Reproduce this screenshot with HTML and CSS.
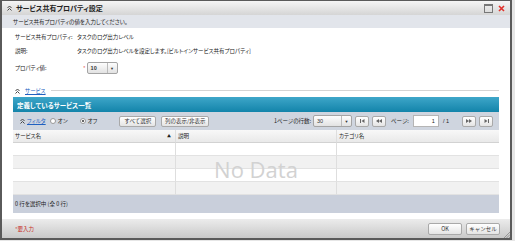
FILE: index.html
```html
<!DOCTYPE html>
<html lang="ja">
<head>
    <meta charset="UTF-8">
    <title>サービス共有プロパティ設定</title>
    <link rel="stylesheet" href="styles.css">
</head>
<body>

    <div class="window">
        <!-- タイトルバー -->
        <div class="titlebar">
            <svg class="chev" width="5" height="6" viewBox="0 0 5 6"><path d="M0.5 3 L2.5 1 L4.5 3 M0.5 5.5 L2.5 3.5 L4.5 5.5" fill="none" stroke="#444" stroke-width="1"/></svg>
            <span class="title">サービス共有プロパティ設定</span>
            <span class="win-max"></span>
            <svg class="win-close" width="7" height="7" viewBox="0 0 7 7"><path d="M1 1 L6 6 M6 1 L1 6" stroke="#e0302a" stroke-width="1.6"/></svg>
        </div>
        <div class="subtitle">サービス共有プロパティの値を入力してください。</div>

        <div class="content">
            <div class="field"><span class="label">サービス共有プロパティ:</span><span>タスクのログ出力レベル</span></div>
            <div class="field"><span class="label">説明:</span><span>タスクのログ出力レベルを設定します。[ビルトインサービス共有プロパティ]</span></div>
            <div class="field prop">
                <span class="label">プロパティ値:</span>
                <span class="req">*</span>
                <span class="combo small"><span class="combo-val">10</span><span class="combo-arrow">▼</span></span>
            </div>

            <div class="section">
                <svg class="chev" width="5" height="6" viewBox="0 0 5 6"><path d="M0.5 3 L2.5 1 L4.5 3 M0.5 5.5 L2.5 3.5 L4.5 5.5" fill="none" stroke="#444" stroke-width="1"/></svg>
                <a class="link" href="#">サービス</a>
                <span class="rule"></span>
            </div>

            <div class="panel">
                <div class="panel-head">定義しているサービス一覧</div>
                <div class="toolbar">
                    <svg class="chev" width="5" height="6" viewBox="0 0 5 6"><path d="M0.5 3 L2.5 1 L4.5 3 M0.5 5.5 L2.5 3.5 L4.5 5.5" fill="none" stroke="#444" stroke-width="1"/></svg>
                    <a class="link filter" href="#">フィルタ</a>
                    <span class="radio"></span><span class="radio-text">オン</span>
                    <span class="radio on"></span><span class="radio-text">オフ</span>
                    <button class="btn sel-all">すべて選択</button>
                    <button class="btn cols">列の表示/非表示</button>

                    <div class="pager">
                        <span>1ページの行数:</span>
                        <span class="combo rows"><span class="combo-val">30</span><span class="combo-arrow">▼</span></span>
                        <button class="btn pg"><svg width="5" height="4" viewBox="0 0 5 4"><path d="M0.5 0 V4" stroke="#666"/><path d="M4.5 0 L1.5 2 L4.5 4 Z" fill="#666"/></svg></button>
                        <button class="btn pg"><svg width="6" height="4" viewBox="0 0 6 4"><path d="M3 0 L0 2 L3 4 Z M6 0 L3 2 L6 4 Z" fill="#666"/></svg></button>
                        <span class="page-lbl">ページ:</span>
                        <span class="page-input">1</span>
                        <span class="page-total">/ 1</span>
                        <button class="btn pg next"><svg width="6" height="4" viewBox="0 0 6 4"><path d="M0 0 L3 2 L0 4 Z M3 0 L6 2 L3 4 Z" fill="#666"/></svg></button>
                        <button class="btn pg"><svg width="5" height="4" viewBox="0 0 5 4"><path d="M0.5 0 L3.5 2 L0.5 4 Z" fill="#666"/><path d="M4.5 0 V4" stroke="#666"/></svg></button>
                    </div>
                </div>

                <div class="grid">
                    <div class="cell head">サービス名<span class="sort">▲</span></div>
                    <div class="cell head">説明</div>
                    <div class="cell head">カテゴリ名</div>

                    <div class="cell"></div><div class="cell"></div><div class="cell"></div>
                    <div class="cell alt"></div><div class="cell alt"></div><div class="cell alt"></div>
                    <div class="cell"></div><div class="cell"></div><div class="cell"></div>
                    <div class="cell alt"></div><div class="cell alt"></div><div class="cell alt"></div>

                    <div class="no-data">No Data</div>
                </div>

                <div class="panel-foot">0 行を選択中 (全 0 行)</div>
            </div>
        </div>

        <!-- フッター -->
        <div class="footer">
            <span class="req-note">*要入力</span>
            <button class="btn foot-btn">OK</button>
            <button class="btn foot-btn">キャンセル</button>
            <svg class="grip" width="7" height="7" viewBox="0 0 7 7"><path d="M1 7 L7 1 M3.5 7 L7 3.5 M6 7 L7 6" stroke="#888" stroke-width="0.8"/></svg>
        </div>
    </div>

</body>
</html>
```

FILE: styles.css
```css
body {
    margin: 0;
    background: #e6e6e6;
    font-family: "Noto Sans CJK JP", "Liberation Sans", sans-serif;
    font-size: 5.5px;
    color: #222;
    font-feature-settings: "palt";
}

.window {
    width: 508px;
    height: 237px;
    border: solid #5a5a5a;
    border-width: 1px 2px 2px 2px;
    background: #fff;
    display: flex;
    flex-direction: column;
}

/* タイトルバー */
.titlebar {
    height: 14px;
    display: flex;
    align-items: center;
    padding: 0 5px 0 5px;
    background: linear-gradient(#f5f5f5, #d5d5d5);
}
.titlebar .chev {
    margin-right: 4px;
}
.title {
    font-size: 7px;
    font-weight: bold;
    color: #222;
    flex: 1;
}
.win-max {
    width: 7px;
    height: 6px;
    border: 1px solid #777;
    border-top-width: 2px;
    margin-right: 5px;
}

.subtitle {
    height: 13px;
    background: #e2e5eb;
    padding-left: 11px;
    display: flex;
    align-items: center;
}

.content {
    flex: 1;
    padding: 2px 11px 0 11px;
}
.field {
    height: 14px;
    display: flex;
    align-items: center;
    padding-left: 2px;
}
.label {
    width: 62px;
    flex-shrink: 0;
}
.field.prop {
    margin-top: 3px;
}
.req {
    color: #e03030;
    margin: 0 1px 0 6px;
}

.combo {
    display: inline-flex;
    align-items: center;
    height: 10px;
    border: 1px solid #a4a4a4;
    border-radius: 2px;
    background: linear-gradient(#fdfdfd, #e2e2e2);
    font-family: "Liberation Sans", sans-serif;
    font-weight: bold;
    color: #333;
}
.combo-val {
    flex: 1;
    padding-left: 3px;
    border-right: 1px solid #bbb;
    line-height: 10px;
}
.combo-arrow {
    width: 9px;
    text-align: center;
    font-size: 4px;
}
.combo.small {
    width: 29px;
}
.combo.rows {
    width: 37px;
    margin-left: 2px;
    font-weight: normal;
}

.section {
    height: 13px;
    margin-top: 9px;
    display: flex;
    align-items: center;
    padding-left: 2px;
}
.link {
    color: #2060c0;
    text-decoration: underline;
}
.section .link {
    margin-left: 5px;
}
.rule {
    flex: 1;
    height: 1px;
    background: #d4d4d4;
    margin-left: 5px;
}

/* 一覧パネル */
.panel {
    display: flex;
    flex-direction: column;
}
.panel-head {
    height: 15px;
    display: flex;
    align-items: center;
    padding-left: 4px;
    background: linear-gradient(#3ea6c9, #1384aa);
    color: #fff;
    font-size: 6.5px;
    font-weight: bold;
}
.toolbar {
    height: 18px;
    display: flex;
    align-items: center;
    padding: 0 6px 0 7px;
    background: #cfd5df;
}
.filter {
    margin-left: 2px;
}
.radio {
    width: 4px;
    height: 4px;
    border: 1px solid #999;
    border-radius: 50%;
    background: #fff;
    margin-left: 4px;
    position: relative;
}
.radio.on {
    margin-left: 12px;
}
.radio.on::after {
    content: "";
    position: absolute;
    left: 1px; top: 1px;
    width: 2px; height: 2px;
    border-radius: 50%;
    background: #333;
}
.radio-text {
    margin-left: 2px;
}

.btn {
    height: 11px;
    padding: 0;
    border: 1px solid #a9a9a9;
    border-radius: 2px;
    background: linear-gradient(#ffffff, #e4e4e4);
    font-family: inherit;
    font-size: 5.5px;
    color: #333;
    display: inline-flex;
    align-items: center;
    justify-content: center;
}
.sel-all {
    width: 37px;
    margin-left: 22px;
}
.cols {
    width: 48px;
    margin-left: 5px;
}

.pager {
    margin-left: auto;
    display: flex;
    align-items: center;
}
.btn.pg {
    width: 14px;
    margin-left: 3px;
}
.page-lbl {
    margin-left: 5px;
}
.page-input {
    width: 21px;
    height: 10px;
    border: 1px solid #b5b5b5;
    background: #fff;
    margin-left: 4px;
    text-align: right;
    padding-right: 3px;
    line-height: 10px;
    font-family: "Liberation Sans", sans-serif;
}
.page-total {
    margin-left: 4px;
    font-family: "Liberation Sans", sans-serif;
}
.btn.pg.next {
    margin-left: 13px;
}

.grid {
    position: relative;
    display: grid;
    grid-template-columns: 163px 161px 1fr;
    grid-auto-rows: 13px;
}
.cell {
    border-right: 1px solid #dedede;
    border-bottom: 1px solid #e2e2e2;
    display: flex;
    align-items: center;
    padding-left: 2px;
}
.cell:nth-child(3n) {
    border-right: none;
}
.cell.head {
    background: linear-gradient(#f8f8f8, #e9e9e9);
    border-bottom-color: #d2d2d2;
}
.cell.alt {
    background: #f1f1f1;
}
.sort {
    margin-left: auto;
    margin-right: 4px;
    font-size: 4px;
}
.no-data {
    position: absolute;
    left: 0; right: 0;
    top: 13px; bottom: 0;
    display: flex;
    align-items: center;
    justify-content: center;
    font-family: "Open Sans", "Liberation Sans", sans-serif;
    font-size: 22px;
    color: #d2d2d2;
}

.panel-foot {
    height: 18px;
    display: flex;
    align-items: center;
    padding-left: 2px;
    background: #c9cfdb;
}

/* フッター */
.footer {
    position: relative;
    height: 19px;
    display: flex;
    align-items: center;
    padding: 0 10px 0 13px;
    background: linear-gradient(#ececec, #c9c9c9);
}
.req-note {
    color: #c8302a;
    flex: 1;
}
.foot-btn {
    width: 34px;
    height: 12px;
    margin-left: 4px;
}
.grip {
    position: absolute;
    right: 0;
    bottom: 0;
}
```
